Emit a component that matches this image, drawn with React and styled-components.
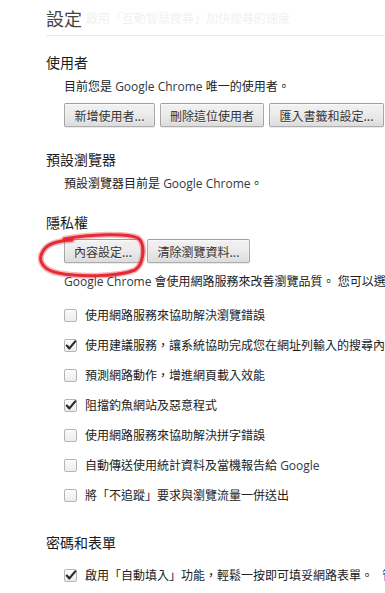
import React from "react";
import styled, { createGlobalStyle } from "styled-components";

const GlobalStyle = createGlobalStyle`
  html, body {
    margin: 0;
    padding: 0;
    background: #fff;
    overflow: hidden;
  }
  body {
    font-family: "Open Sans", "Noto Sans CJK TC", sans-serif;
    color: #222;
  }
`;

const Page = styled.div`
  padding-left: 46px;
  white-space: nowrap;
  width: 339px;
`;

const Header = styled.header`
  display: flex;
  align-items: center;
  height: 35px;
  border-bottom: 1px solid #ebebeb;
`;

const Title = styled.h1`
  margin: 0;
  font-size: 18px;
  font-weight: normal;
  line-height: 1;
  color: #444;
  font-family: "Noto Sans CJK TC", sans-serif;
`;

const Ghost = styled.span`
  margin-left: 4px;
  font-size: 12px;
  color: #f1f1f1;
  font-family: "Noto Sans CJK TC", sans-serif;
`;

const Section = styled.section`
  margin-top: ${(p) => p.$top}px;
`;

const SectionTitle = styled.h3`
  margin: 0;
  font-size: 14px;
  line-height: 20px;
  font-weight: normal;
  color: #1a1a1a;
  font-family: "Noto Sans CJK TC", sans-serif;
`;

const Body = styled.div`
  padding-left: 18px;
`;

const Text = styled.div`
  margin-top: ${(p) => p.$top}px;
  font-size: 12px;
  line-height: 18px;
  color: #222;
`;

const Latin = styled.span`
  color: #303942;
`;

const ButtonRow = styled.div`
  position: relative;
  display: flex;
  gap: 5px;
  margin-top: ${(p) => p.$top}px;
`;

const Button = styled.button`
  box-sizing: border-box;
  width: ${(p) => p.$w}px;
  height: 24px;
  padding: 0;
  font-family: "Noto Sans CJK TC", sans-serif;
  font-size: 12px;
  color: #333;
  background: linear-gradient(#f0f0f0, #ededed 38%, #dcdcdc);
  border: 1px solid rgba(0, 0, 0, 0.28);
  border-radius: 2px;
  box-shadow: 0 1px 0 rgba(0, 0, 0, 0.08), inset 0 1px 2px rgba(255, 255, 255, 0.75);
  text-shadow: 0 1px 0 #f0f0f0;
  flex: none;
`;

const Scribble = styled.svg`
  position: absolute;
  left: -28px;
  top: -7px;
  pointer-events: none;
  overflow: visible;
`;

const List = styled.div`
  margin-top: ${(p) => p.$top}px;
`;

const Row = styled.label`
  display: flex;
  align-items: center;
  height: 30px;
  font-size: 12px;
  color: #222;
`;

const Label = styled.span`
  white-space: nowrap;
`;

const Box = styled.span`
  position: relative;
  box-sizing: border-box;
  width: 13px;
  height: 13px;
  flex: none;
  margin-right: 8px;
  border: 1px solid #b5b5b5;
  border-radius: 2px;
  background: linear-gradient(#fbfbfb, #ececec);
  box-shadow: inset 0 1px 0 #fff;
`;

const Check = styled.svg`
  position: absolute;
  left: 0;
  top: -1px;
`;

const Link = styled.span`
  color: #1155cc;
  margin-left: 9px;
`;

function Checkbox({ checked }) {
  return (
    <Box>
      {checked && (
        <Check width="12" height="12" viewBox="0 0 12 12">
          <path d="M1.8 6.6 L4.4 9.4 L10.2 2.4" fill="none" stroke="#2a2a2a" strokeWidth="2.2" strokeLinecap="round" strokeLinejoin="round" />
        </Check>
      )}
    </Box>
  );
}

const privacyItems = [
  { label: "使用網路服務來協助解決瀏覽錯誤", checked: false },
  { label: "使用建議服務，讓系統協助完成您在網址列輸入的搜尋內容和網址", checked: true },
  { label: "預測網路動作，增進網頁載入效能", checked: false },
  { label: "阻擋釣魚網站及惡意程式", checked: true },
  { label: "使用網路服務來協助解決拼字錯誤", checked: false },
  { label: <>自動傳送使用統計資料及當機報告給{" "}<Latin>Google</Latin></>, checked: false },
  { label: "將「不追蹤」要求與瀏覽流量一併送出", checked: false },
];

const scribblePath =
  "M28 7 C 55 2, 92 1, 102 6 C 110 12, 108 32, 99 38 C 82 45, 42 45, 22 41 C 7 38, 2 29, 6 21 C 10 12, 20 9, 36 8";

export default function App() {
  return (
    <>
      <GlobalStyle />
      <Page>
        <Header>
          <Title>設定</Title>
          <Ghost>啟用「互動智慧搜尋」加快搜尋的速度</Ghost>
        </Header>

        <Section $top={16}>
          <SectionTitle>使用者</SectionTitle>
          <Body>
            <Text $top={6}>目前您是 <Latin>Google Chrome</Latin> 唯一的使用者。</Text>
            <ButtonRow $top={7}>
              <Button $w={91}>新增使用者...</Button>
              <Button $w={104}>刪除這位使用者</Button>
              <Button $w={115}>匯入書籤和設定...</Button>
            </ButtonRow>
          </Body>
        </Section>

        <Section $top={22}>
          <SectionTitle>預設瀏覽器</SectionTitle>
          <Body>
            <Text $top={6}>預設瀏覽器目前是 <Latin>Google Chrome</Latin>。</Text>
          </Body>
        </Section>

        <Section $top={19}>
          <SectionTitle>隱私權</SectionTitle>
          <Body>
            <ButtonRow $top={7}>
              <Button $w={78}>內容設定...</Button>
              <Button $w={103}>清除瀏覽資料...</Button>
              <Scribble width="112" height="46" viewBox="0 0 112 46">
                <path d={scribblePath} fill="none" stroke="#e8303a" strokeOpacity="0.35" strokeWidth="6" strokeLinecap="round" />
                <path d={scribblePath} fill="none" stroke="#e0141e" strokeOpacity="0.85" strokeWidth="3" strokeLinecap="round" />
              </Scribble>
            </ButtonRow>
            <Text $top={10}><Latin>Google Chrome</Latin> 會使用網路服務來改善瀏覽品質。 您可以選擇停用這些服務。</Text>
            <List $top={9}>
              {privacyItems.map((item, i) => (
                <Row key={i}>
                  <Checkbox checked={item.checked} />
                  <Label>{item.label}</Label>
                </Row>
              ))}
            </List>
          </Body>
        </Section>

        <Section $top={22}>
          <SectionTitle>密碼和表單</SectionTitle>
          <Body>
            <List $top={8}>
              <Row>
                <Checkbox checked />
                <Label>
                  啟用「自動填入」功能，輕鬆一按即可填妥網路表單。<Link>管理自動填入設定...</Link>
                </Label>
              </Row>
            </List>
          </Body>
        </Section>
      </Page>
    </>
  );
}
